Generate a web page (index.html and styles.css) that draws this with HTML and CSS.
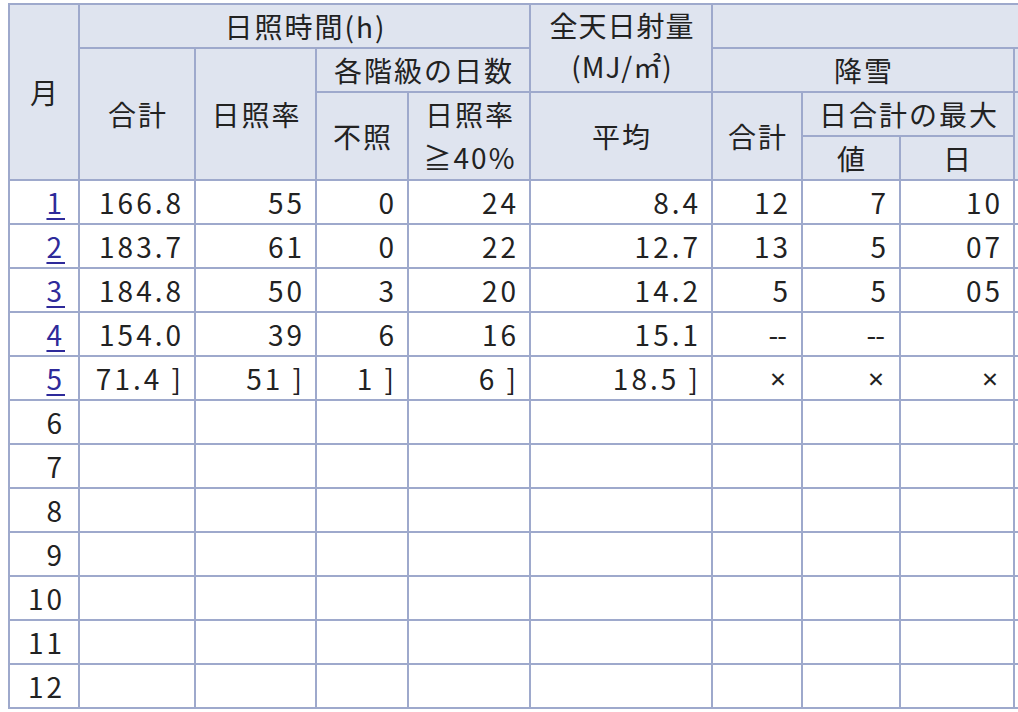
FILE: index.html
```html
<!DOCTYPE html>
<html lang="ja">
<head>
<meta charset="utf-8">
<title>日照時間・日射量・降雪</title>
<link rel="stylesheet" href="styles.css">
</head>
<body>
<table class="data">
  <colgroup>
    <col class="c-month">
    <col class="c-total">
    <col class="c-rate">
    <col class="c-none">
    <col class="c-r40">
    <col class="c-avg">
    <col class="c-snow">
    <col class="c-val">
    <col class="c-day">
    <col class="c-x">
    <col class="c-x">
  </colgroup>
  <thead>
    <tr>
      <th rowspan="4">月</th>
      <th colspan="4">日照時間(h)</th>
      <th rowspan="2" class="two-line">全天日射量<br>(MJ/㎡)</th>
      <th colspan="5"></th>
    </tr>
    <tr>
      <th rowspan="3">合計</th>
      <th rowspan="3">日照率</th>
      <th colspan="2">各階級の日数</th>
      <th colspan="3">降雪</th>
      <th colspan="2"></th>
    </tr>
    <tr>
      <th rowspan="2">不照</th>
      <th rowspan="2" class="ratio">日照率<br>≧40%</th>
      <th rowspan="2">平均</th>
      <th rowspan="2">合計</th>
      <th colspan="2">日合計の最大</th>
      <th rowspan="2"></th>
      <th rowspan="2"></th>
    </tr>
    <tr>
      <th>値</th>
      <th>日</th>
    </tr>
  </thead>
  <tbody>
    <tr><td class="month"><a href="#">1</a></td><td>166.8</td><td>55</td><td>0</td><td>24</td><td>8.4</td><td>12</td><td>7</td><td>10</td><td></td><td></td></tr>
    <tr><td class="month"><a href="#">2</a></td><td>183.7</td><td>61</td><td>0</td><td>22</td><td>12.7</td><td>13</td><td>5</td><td>07</td><td></td><td></td></tr>
    <tr><td class="month"><a href="#">3</a></td><td>184.8</td><td>50</td><td>3</td><td>20</td><td>14.2</td><td>5</td><td>5</td><td>05</td><td></td><td></td></tr>
    <tr><td class="month"><a href="#">4</a></td><td>154.0</td><td>39</td><td>6</td><td>16</td><td>15.1</td><td class="dash">--</td><td class="dash">--</td><td></td><td></td><td></td></tr>
    <tr><td class="month"><a href="#">5</a></td><td>71.4 ]</td><td>51 ]</td><td>1 ]</td><td>6 ]</td><td>18.5 ]</td><td class="cross">×</td><td class="cross">×</td><td class="cross">×</td><td></td><td></td></tr>
    <tr><td class="month">6</td><td></td><td></td><td></td><td></td><td></td><td></td><td></td><td></td><td></td><td></td></tr>
    <tr><td class="month">7</td><td></td><td></td><td></td><td></td><td></td><td></td><td></td><td></td><td></td><td></td></tr>
    <tr><td class="month">8</td><td></td><td></td><td></td><td></td><td></td><td></td><td></td><td></td><td></td><td></td></tr>
    <tr><td class="month">9</td><td></td><td></td><td></td><td></td><td></td><td></td><td></td><td></td><td></td><td></td></tr>
    <tr><td class="month">10</td><td></td><td></td><td></td><td></td><td></td><td></td><td></td><td></td><td></td><td></td></tr>
    <tr><td class="month">11</td><td></td><td></td><td></td><td></td><td></td><td></td><td></td><td></td><td></td><td></td></tr>
    <tr><td class="month">12</td><td></td><td></td><td></td><td></td><td></td><td></td><td></td><td></td><td></td><td></td></tr>
  </tbody>
</table>
</body>
</html>
```

FILE: styles.css
```css
html, body {
  background: #ffffff;
}
body {
  margin: 3px 0 0 8px;
  overflow: hidden;
  font-family: "Noto Sans CJK JP", "Noto Sans", sans-serif;
  color: #222222;
}
.data {
  border-collapse: collapse;
  table-layout: fixed;
  width: 1205px;
  font-size: 28px;
  letter-spacing: 3px;
}
.c-month { width: 70px; }
.c-total { width: 116px; }
.c-rate { width: 121px; }
.c-none { width: 92px; }
.c-r40 { width: 122px; }
.c-avg { width: 182px; }
.c-snow { width: 90px; }
.c-val { width: 98px; }
.c-day { width: 114px; }
.c-x { width: 100px; }

.data th,
.data td {
  border: 2px solid #9ea9cc;
  padding: 4px 10px 4px 4px;
  line-height: 34px;
  height: 34px;
  white-space: nowrap;
  overflow: hidden;
}
.data th {
  background: #dfe4ef;
  font-weight: normal;
  text-align: center;
  padding: 4px 0 4px 2px;
  letter-spacing: 2px;
}
.data td {
  background: #ffffff;
  text-align: right;
}
.data td.month {
  padding-right: 13px;
}
.data th.two-line {
  line-height: 41px;
  padding: 0 0 4px 2px;
  letter-spacing: 1px;
}
.data th.ratio {
  line-height: 43px;
  padding: 0 0 0 2px;
}
.data a {
  color: #2e2a9a;
  text-decoration: underline;
  text-underline-offset: 4px;
}
.data td.dash {
  letter-spacing: -1px;
  padding-right: 15px;
}
.data td.cross {
  font-family: "Noto Sans", sans-serif;
  letter-spacing: 0;
  padding-right: 15px;
}
```
